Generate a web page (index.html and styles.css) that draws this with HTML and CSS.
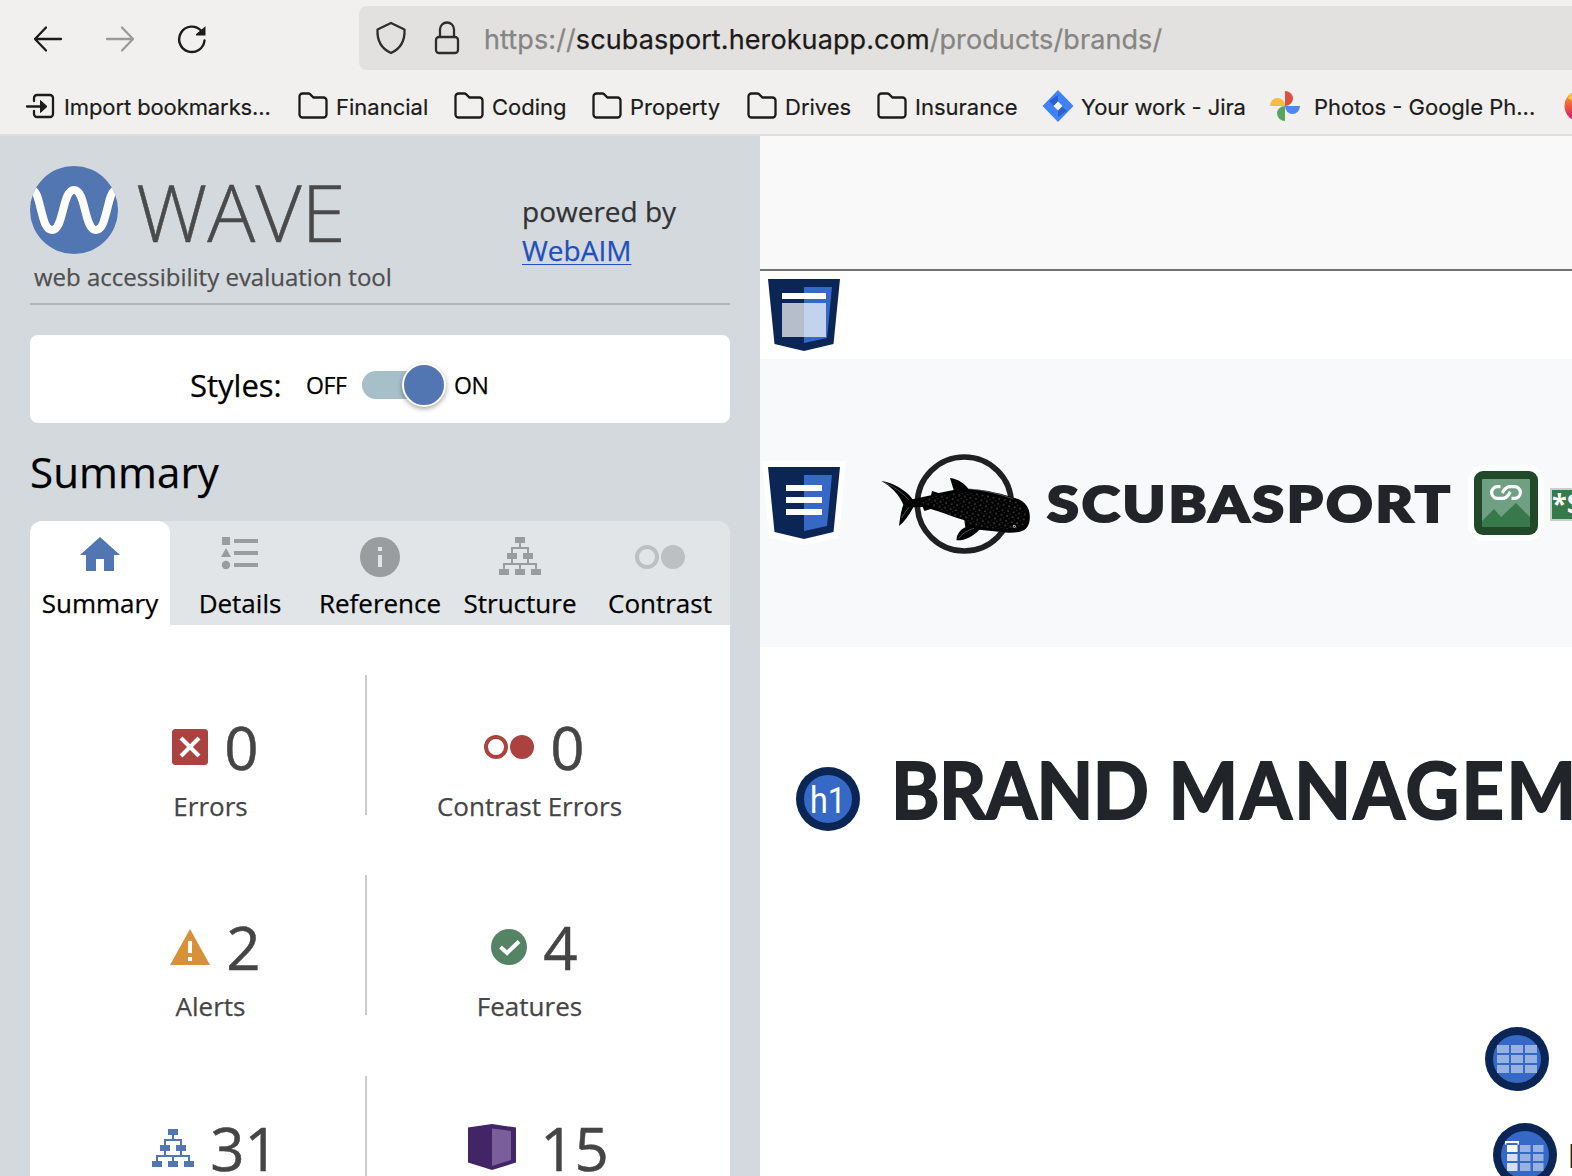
FILE: index.html
```html
<!DOCTYPE html>
<html lang="en">
<head>
<meta charset="utf-8">
<title>Brand Management</title>
<link rel="stylesheet" href="styles.css">
</head>
<body>
<svg class="defs" width="0" height="0" aria-hidden="true">
  <symbol id="folder" viewBox="0 0 30 28"><path d="M1.5 5V22.5a3 3 0 0 0 3 3h21a3 3 0 0 0 3-3V8.5a3 3 0 0 0-3-3H15.5L12 2.2a2.500 2.500 0 0 0-1.800-.7H4.500a3 3 0 0 0-3 3z" fill="none" stroke="#1c1b1a" stroke-width="2.300"/></symbol>
  <symbol id="tree" viewBox="0 0 42 38"><path d="M16 0h10v6H16zM8 16h10v6H8zM24 16h10v6H24zM0 32h10v6H0zM16 32h10v6H16zM32 32h10v6H32z" fill="currentColor"/><path d="M21 6v5M13 17v-6h16v6M13 22v5M29 22v5M5 33v-6h32v6M21 27v6" fill="none" stroke="currentColor" stroke-width="2"/></symbol>
</svg>

<header class="browser">
  <div class="toolbar">
    <div class="nav">
      <svg width="30" height="30" viewBox="0 0 30 30" fill="none" stroke="#1c1b1a" stroke-width="2.300" stroke-linecap="round" stroke-linejoin="round"><path d="M28 15H2M13 3.500L2 15l11 11.500"/></svg>
      <svg width="30" height="30" viewBox="0 0 30 30" fill="none" stroke="#9b9a99" stroke-width="2.300" stroke-linecap="round" stroke-linejoin="round"><path d="M2 15h26M17 3.500L28 15 17 26.500"/></svg>
      <svg width="30" height="30" viewBox="0 0 30 30"><path d="M27.500 16.500A12.700 12.700 0 1 1 24 6.500" fill="none" stroke="#1c1b1a" stroke-width="2.400" stroke-linecap="round"/><path d="M28.500 2.300V11.500h-8.700a.9.9 0 0 1-.6-1.500z" fill="#1c1b1a"/></svg>
    </div>
    <div class="urlbar">
      <svg width="32" height="34" viewBox="0 0 32 34"><path d="M16 2L29.500 8.500C30 19 26 27.500 16 32 6 27.500 2 19 2.500 8.500z" fill="none" stroke="#2e2d2c" stroke-width="2.300" stroke-linejoin="round"/></svg>
      <svg width="26" height="34" viewBox="0 0 26 34" fill="none" stroke="#2e2d2c" stroke-width="2.300"><rect x="2" y="16" width="22" height="16" rx="3"/><path d="M6 16V8.500a7 7 0 0 1 14 0V16"/></svg>
      <span class="url">https://<b>scubasport.herokuapp.com</b>/products/brands/</span>
    </div>
  </div>
  <nav class="bookmarks">
    <a><svg width="30" height="26" viewBox="0 0 30 26"><path d="M9 8V5a3 3 0 0 1 3-3h13a3 3 0 0 1 3 3v16a3 3 0 0 1-3 3H12a3 3 0 0 1-3-3v-3M2 13.500h14" fill="none" stroke="#1c1b1a" stroke-width="2.300" stroke-linecap="round"/><path d="M15.500 7.500L22 13.500l-6.500 6z" fill="#1c1b1a" stroke="#1c1b1a" stroke-linejoin="round"/></svg><span class="tight">Import bookmarks...</span></a>
    <a><svg width="30" height="28"><use href="#folder"/></svg><span>Financial</span></a>
    <a><svg width="30" height="28"><use href="#folder"/></svg><span>Coding</span></a>
    <a><svg width="30" height="28"><use href="#folder"/></svg><span>Property</span></a>
    <a><svg width="30" height="28"><use href="#folder"/></svg><span>Drives</span></a>
    <a><svg width="30" height="28"><use href="#folder"/></svg><span>Insurance</span></a>
    <a><svg width="32" height="32" viewBox="0 0 32 32"><path d="M16 0L31.500 16 16 32 .5 16z" fill="#3f82f7"/><path d="M16 5v7l-4 4-5-5zM16 27v-7l4-4 5 5z" fill="#2a5fd0"/><path d="M16 11.500L20.500 16 16 20.500 11.500 16z" fill="#f3f3f3"/></svg><span class="tight jira">Your work - Jira</span></a>
    <a><svg width="30" height="30" viewBox="0 0 30 30"><path d="M15 0a8 7.500 0 0 1 0 15z" fill="#db5040"/><path d="M30 15a7.500 8 0 0 1-15 0z" fill="#4f86ef"/><path d="M15 30a8 7.500 0 0 1 0-15z" fill="#58a65c"/><path d="M0 15a7.500 8 0 0 1 15 0z" fill="#f3bd42"/></svg><span class="photos">Photos - Google Ph...</span></a>
    <a><svg width="32" height="32" viewBox="0 0 32 32"><defs><linearGradient id="fx" x1="0" y1="0" x2="0" y2="1"><stop offset=".1" stop-color="#f7a13c"/><stop offset=".5" stop-color="#ee5a3c"/><stop offset=".85" stop-color="#d6246e"/></linearGradient></defs><circle cx="16" cy="16" r="15.500" fill="url(#fx)"/><path d="M4 8l3-5 3 9z" fill="#fbc54a"/></svg></a>
  </nav>
</header>

<div class="content">
  <aside class="sidebar">
    <div class="brand">
      <div class="brand-main">
        <div class="logo">
          <svg width="88" height="88" viewBox="0 0 88 88"><clipPath id="disc"><circle cx="44" cy="44" r="44"/></clipPath><circle cx="44" cy="44" r="44" fill="#5276b1"/><path clip-path="url(#disc)" d="M-4 24C6 20 8 32 10 40 14 56 16 64 22 64 34 64 32 24 44 24 56 24 54 64 66 64 72 64 74 56 78 40 80 32 82 20 92 24" fill="none" stroke="#fff" stroke-width="8"/></svg>
          <span>WAVE</span>
        </div>
        <p class="tagline">web accessibility evaluation tool</p>
      </div>
      <p class="powered">powered by<br><a>WebAIM</a></p>
    </div>

    <div class="styles-card">
      <span class="styles-label">Styles:</span><span class="off">OFF</span>
      <span class="switch"><i></i></span><span class="on">ON</span>
    </div>

    <h2>Summary</h2>

    <div class="tabs">
      <div class="tab active"><svg width="60" height="40" viewBox="0 0 60 40"><path d="M30 0L50 18H44V34H34V22H26V34H16V18H10z" fill="#5276b1"/></svg><span>Summary</span></div>
      <div class="tab"><svg width="60" height="40" viewBox="0 0 60 40" fill="#9a9d9e"><path d="M12 0h8v8h-8zM24 2h24v4H24zM24 14h24v4H24zM24 26h24v4H24zM16 11l5 9H11z"/><circle cx="16" cy="28" r="4.200"/></svg><span>Details</span></div>
      <div class="tab"><svg width="60" height="40" viewBox="0 0 60 40"><circle cx="30" cy="20" r="20" fill="#9a9d9e"/><path d="M28 10h4v4h-4zM28 18h4v12h-4z" fill="#e1e5e8"/></svg><span>Reference</span></div>
      <div class="tab"><svg class="tree-tab" width="42" height="38"><use href="#tree"/></svg><span>Structure</span></div>
      <div class="tab"><svg width="60" height="40" viewBox="0 0 60 40"><circle cx="17" cy="20" r="10" fill="none" stroke="#bdc0c1" stroke-width="4"/><circle cx="43" cy="20" r="12" fill="#bdc0c1"/></svg><span>Contrast</span></div>
    </div>

    <div class="panel">
      <div class="row">
        <div class="stat"><div class="count"><svg width="36" height="36" viewBox="0 0 36 36"><rect width="36" height="36" rx="3.500" fill="#ab423f"/><path d="M9 9l18 18M27 9L9 27" stroke="#fff" stroke-width="4"/></svg><b>0</b></div><p>Errors</p></div>
        <div class="stat"><div class="count"><svg width="50" height="24" viewBox="0 0 50 24"><circle cx="12" cy="12" r="10" fill="none" stroke="#ab423f" stroke-width="4"/><circle cx="38" cy="12" r="12" fill="#ab423f"/></svg><b>0</b></div><p>Contrast Errors</p></div>
      </div>
      <div class="row row-alerts">
        <div class="stat"><div class="count"><svg width="40" height="36" viewBox="0 0 40 36"><path d="M20 0l20 36H0z" fill="#d79239"/><path d="M18 12h4v12h-4zM18 28h4v4h-4z" fill="#fff"/></svg><b>2</b></div><p>Alerts</p></div>
        <div class="stat"><div class="count"><svg width="36" height="36" viewBox="0 0 36 36"><circle cx="18" cy="18" r="18" fill="#548465"/><path d="M9.500 18l6.500 6 12-11.500" fill="none" stroke="#fff" stroke-width="4"/></svg><b>4</b></div><p>Features</p></div>
      </div>
      <div class="row">
        <div class="stat"><div class="count"><svg class="tree-blue" width="42" height="38"><use href="#tree"/></svg><b>31</b></div></div>
        <div class="stat"><div class="count aria"><svg width="60" height="46" viewBox="0 0 60 46"><path d="M6 3.500L30 0l24 3.500v35L30 46 6 38.500z" fill="#432567"/><path d="M30 4.500l19 2.500v29L30 42z" fill="#7a5e99"/></svg><b>15</b></div></div>
      </div>
    </div>
  </aside>

  <main class="page">
    <div class="topband"></div>
    <div class="headband">
      <svg width="72" height="72" viewBox="0 0 72 72"><path d="M0 0h72l-6.500 65L36 72 6.500 65z" fill="#0b2555"/><path d="M36 8h28l-5 51-23 5z" fill="#3669c5"/><path d="M14 14h44v6H14z" fill="#fff"/><path d="M14 24h44v34H14z" fill="#fff" fill-opacity=".7"/></svg>
    </div>
    <div class="site-nav">
      <svg class="nav-badge" width="84" height="84" viewBox="-6 -6 84 84"><path d="M-6-6h84L71 71 36 78 1 71z" fill="#fff"/><path d="M0 0h72l-6.500 65L36 72 6.500 65z" fill="#0b2555"/><path d="M36 8h28l-5 51-23 5z" fill="#3669c5"/><path d="M18 18h36v6H18zM18 30h36v6H18zM18 42h36v6H18z" fill="#fff"/></svg>
      <svg class="whale" width="150" height="102" viewBox="390 40 450 306">
        <defs><pattern id="dots" width="17" height="15" patternUnits="userSpaceOnUse" patternTransform="rotate(12)"><circle cx="3" cy="3" r="1.500" fill="#ddd"/><circle cx="11" cy="10" r="1.300" fill="#aaa"/></pattern></defs>
        <circle cx="643" cy="193" r="141" fill="none" stroke="#1f201f" stroke-width="17"/>
        <path d="M394 124C425 128 468 150 488 179L543 167 546 154 566 160 611 151 600 115C625 118 645 133 655 147C710 150 760 163 805 178C830 188 842 212 839 240C836 268 820 280 775 279L688 270C668 291 645 303 620 302C618 287 630 270 646 263L643 242C608 231 575 217 542 208L523 214 518 202 490 203C478 225 464 246 447 259C450 235 453 213 460 195C447 165 425 142 394 124z" fill="#000"/>
        <path d="M500 183L560 168 640 158 700 163 800 185 830 220 825 258 780 272 690 262 650 250 550 202z" fill="url(#dots)"/>
        <path d="M655 147Q730 155 790 178M404 128Q450 150 478 182M455 235Q465 215 478 202M626 297Q640 275 672 266" fill="none" stroke="#999" stroke-width="1.500"/>
        <circle cx="793" cy="260" r="4.500" fill="#bbb"/><circle cx="793" cy="260" r="2" fill="#000"/>
      </svg>
      <span class="wordmark"><span>SCUBASPORT</span></span>
      <svg class="link-badge" width="76" height="76" viewBox="-6 -6 76 76"><rect x="-6" y="-6" width="76" height="76" rx="16" fill="#fff"/><rect width="64" height="64" rx="9" fill="#1f4928"/><rect x="8" y="8" width="48" height="48" rx="1" fill="#6fa083"/><path d="M8 50l12-12 7 8 15-14 14 14v10H8z" fill="#38794c"/><path d="M26.500 15.600H23.500a5.900 5.900 0 0 0 0 11.800H28.500c4.500 0 5.500-3 7.800-6.400M37.500 27.400h3a5.900 5.900 0 0 0 0-11.800H36c-4.500 0-5.500 3-7.800 6.400" fill="none" stroke="#fff" stroke-width="3.200"/></svg>
      <span class="alt">*S</span>
    </div>
    <div class="title">
      <svg width="64" height="64" viewBox="0 0 64 64"><circle cx="32" cy="32" r="32" fill="#0b2555"/><circle cx="32" cy="32" r="24" fill="#3669c5"/><text class="h1-text" x="14" y="45.500" textLength="36" lengthAdjust="spacingAndGlyphs">h1</text></svg>
      <h1><span>BRAND</span> MANAGEMENT</h1>
    </div>
    <div class="table-marks">
      <svg width="64" height="64" viewBox="0 0 64 64"><circle cx="32" cy="32" r="32" fill="#0b2555"/><circle cx="32" cy="32" r="24" fill="#3669c5"/><path d="M12 18h12v8H12zM26 18h12v8H26zM40 18h12v8H40zM12 28h12v8H12zM26 28h12v8H26zM40 28h12v8H40zM12 38h12v8H12zM26 38h12v8H26zM40 38h12v8H40z" fill="#97b2e1"/></svg>
      <div class="th-row">
        <svg width="64" height="64" viewBox="0 0 64 64"><circle cx="32" cy="32" r="32" fill="#0b2555"/><circle cx="32" cy="32" r="24" fill="#3669c5"/><path d="M27 22h10.500v7H27zM40 22h10.500v7H40zM27 31h10.500v7H27zM40 31h10.500v7H40zM27 40h10.500v8H27zM40 40h10.500v8H40z" fill="#97b2e1"/><path d="M14 31h10.500v7H14zM14 40h10.500v8H14z" fill="#d5e0f3"/><path d="M14 22h10.500v7H14zM12 18h14v3.500h-1.500V20h-11v1.500H12z" fill="#fff"/></svg>
        <b>Name</b>
      </div>
    </div>
  </main>
</div>
</body>
</html>
```

FILE: styles.css
```css
* { box-sizing: border-box; }
body { margin: 0; width: 1572px; height: 1176px; overflow: hidden; display: flex; flex-direction: column; background: #fff; font-family: "Open Sans", sans-serif; color: #000; }
p, h1, h2 { margin: 0; font-weight: 400; }
svg { display: block; flex: none; }
.defs { position: absolute; }

.browser { height: 136px; flex: none; background: #f1f0ee; border-bottom: 2px solid #dfdedc; font-family: Inter, sans-serif; color: #1c1b1a; }
.toolbar { display: flex; height: 70px; padding-top: 6px; }
.nav { width: 359px; flex: none; display: flex; gap: 42px; align-items: center; padding: 0 0 0 33px; }
.nav svg { margin-top: 2px; }
.urlbar { flex: 1; height: 64px; background: #e2e1df; border-radius: 8px 0 0 8px; display: flex; align-items: center; padding-left: 16px; overflow: hidden; }
.urlbar svg:nth-child(2) { margin: 0 24px 0 27px; }
.url { font-size: 27px; line-height: 60px; padding-top: 4px; letter-spacing: .1px; color: #868583; white-space: nowrap; -webkit-text-stroke: .25px; }
.url b { font-weight: 400; color: #1c1b1a; }
.bookmarks { display: grid; grid-template-columns: 273px 156px 138px 155px 130px 165px 228px 294px 34px; padding: 19px 0 0 25px; overflow: hidden; }
.bookmarks a { display: flex; align-items: center; height: 36px; white-space: nowrap; font-size: 22px; gap: 8px; -webkit-text-stroke: .2px; }
.bookmarks a:first-child { gap: 9px; }
.bookmarks a svg { margin-top: -3px; }
.bookmarks .tight { letter-spacing: -.1px; }
.bookmarks .jira { margin-left: -1px; }
.bookmarks .photos { margin-left: 6px; }

.content { flex: 1; display: flex; min-height: 0; }
.sidebar { width: 760px; flex: none; background: #d4d9de; padding: 30px 30px 0; overflow: hidden; -webkit-text-stroke: .25px; }
.brand { height: 139px; border-bottom: 2px solid #b2b6ba; display: flex; }
.brand-main { width: 492px; }
.logo { display: flex; height: 88px; gap: 18px; }
.logo span { font-size: 80px; font-weight: 300; line-height: 90px; color: #4a4a4a; -webkit-text-stroke: .5px; }
.tagline { font-size: 24px; line-height: 46px; padding-left: 4px; color: #4f4f4f; }
.powered { font-size: 28px; line-height: 39px; padding-top: 26px; color: #333; }
.powered a { color: #1f4fc0; text-decoration: underline; text-decoration-thickness: 1px; text-underline-offset: 3px; }

.styles-card { margin-top: 30px; height: 88px; background: #fff; border-radius: 8px; display: flex; align-items: center; padding: 12px 0 0 160px; font-size: 23px; }
.styles-label { font-size: 31px; width: 116px; margin-top: -1px; }
.off { width: 56px; letter-spacing: -.4px; }
.switch { width: 82px; height: 28px; border-radius: 14px; background: #a6bfc9; display: flex; align-items: center; justify-content: flex-end; }
.switch i { width: 44px; height: 44px; flex: none; border-radius: 50%; background: #5276b1; border: 2px solid #fff; box-shadow: 0 2px 5px rgba(0,0,0,.35); transform: translateX(2px); }
.on { margin-left: 10px; letter-spacing: -.3px; }
h2 { font-size: 42px; line-height: 98px; letter-spacing: .1px; }

.tabs { display: grid; grid-template-columns: repeat(5, 140px); background: #e1e5e8; border-radius: 12px 12px 0 0; height: 104px; }
.tab { display: flex; flex-direction: column; align-items: center; padding-top: 16px; font-size: 26px; line-height: 40px; white-space: nowrap; }
.tab svg { height: 40px; margin-bottom: 6px; }
.tab .tree-tab { height: 38px; margin-bottom: 8px; color: #9a9d9e; }
.active { background: #fff; border-radius: 12px 12px 0 0; }

.panel { background: #fff; padding: 50px 35px 0 26px; height: 600px; color: #454545; }
.row { display: grid; grid-template-columns: 311px 325px; height: 200px; }
.row-alerts { height: 201px; }
.stat { height: 140px; display: flex; flex-direction: column; align-items: center; }
.stat:first-child { border-right: 2px solid #ccc; }
.count { display: flex; align-items: center; height: 72px; margin-top: 36px; padding-left: 10px; gap: 16px; }
.count b { font-weight: 400; font-size: 60px; line-height: 72px; -webkit-text-stroke: .5px; }
.aria { gap: 18px; padding-left: 12px; }
.aria svg { margin-top: -2px; }
.stat p { font-size: 26px; line-height: 40px; margin-top: 3px; white-space: nowrap; }
.tree-blue { color: #5276b1; }

.page { flex: 1; min-width: 0; overflow: hidden; color: #212529; }
.topband { height: 135px; background: #f9f9f9; border-bottom: 2px solid #70766f; }
.headband { height: 88px; padding: 8px; }
.site-nav { height: 288px; background: #f8f9fb; display: flex; align-items: center; padding: 0 0 0 2px; }
.whale { margin: 2px 0 0 34px; }
.wordmark { width: 402px; flex: none; margin-left: 17px; }
.wordmark span { display: inline-block; font-family: Lato, sans-serif; font-weight: 900; font-size: 49px; line-height: 60px; white-space: nowrap; -webkit-text-stroke: 2.2px #212529; letter-spacing: 2.5px; transform: scaleX(1.175); transform-origin: left; }
.link-badge { margin-left: 19px; }
.alt { margin-left: 6px; flex: none; height: 33px; margin-top: 2px; border: 2px solid #ccc; background: #38794c; color: #fff; font-size: 27px; font-weight: 700; line-height: 25px; }
.title { display: flex; height: 380px; padding: 105px 0 0 36px; }
.title > svg { margin-top: 15px; }
.h1-text { font: 400 37px Roboto, sans-serif; fill: #fff; }
h1 { font-family: Lato, sans-serif; font-weight: 700; font-size: 78px; line-height: 74px; margin-left: 31px; white-space: nowrap; transform: scaleX(.945); transform-origin: left; letter-spacing: 2.6px; -webkit-text-stroke: 2px #212529; }
h1 span { letter-spacing: -.6px; }
.table-marks { padding-left: 725px; }
.th-row { display: flex; margin: 32px 0 0 8px; gap: 11px; align-items: center; }
.th-row b { font-family: Lato, sans-serif; font-size: 32px; }
```
